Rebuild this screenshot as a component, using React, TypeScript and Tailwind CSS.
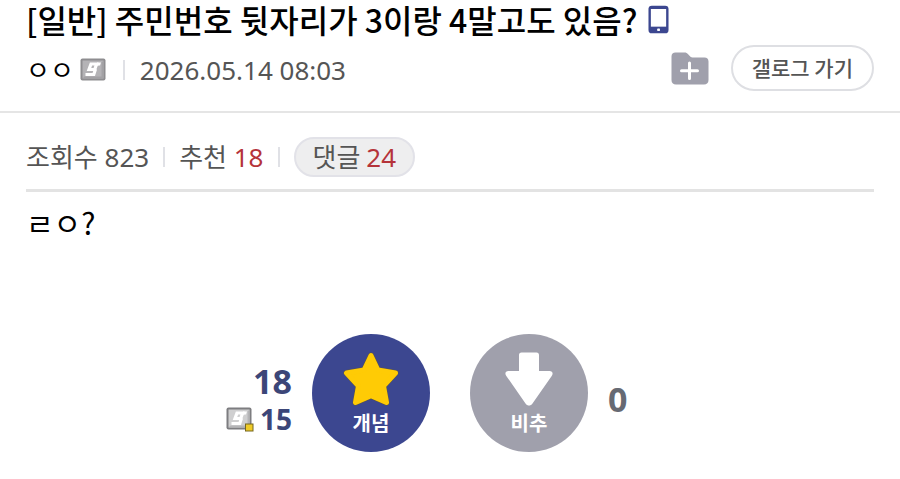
import type { ReactNode } from "react";

function Divider() {
  return <span aria-hidden="true" className="h-5 w-0.5 shrink-0 bg-[#e0e1e6]" />;
}

function MemberBadge({ dark = false, gold = false }: { dark?: boolean; gold?: boolean }) {
  return (
    <svg viewBox="0 0 28 25" className="h-[25px] w-7 shrink-0" aria-hidden="true">
      <rect x="0.5" y="0.5" width="25" height="22" rx="2" fill={dark ? "#7d7d80" : "#8e8d90"} />
      <rect x="2.5" y="2.5" width="21" height="18" fill={dark ? "#cfcfd0" : "#b4b3b6"} />
      <path d="M23.500 2.500v18h-21l2-2h17v-14z" fill={dark ? "#b5b5b7" : "#a3a2a5"} />
      <path
        d="M18.500 6H11L9 11.500H14.700L16.500 6.500M15.500 11L13.800 16.500H5.500"
        fill="none"
        stroke="#fff"
        strokeWidth="3.200"
      />
      <path d="M17 4.400h4l-1 3.200h-3z" fill="#fff" />
      {gold && <rect x="19.500" y="17" width="7.500" height="7" fill="#efcb28" stroke="#75661f" strokeWidth="1" />}
    </svg>
  );
}

function PhoneIcon() {
  return (
    <svg viewBox="0 0 22 30" className="h-[29px] w-[21px] shrink-0" role="img" aria-label="모바일">
      <rect x="0.5" y="0.5" width="21" height="29" rx="3.5" fill="#3c4790" />
      <rect x="3" y="4" width="16" height="18.5" fill="#fff" />
      <rect x="9.7" y="24.5" width="2.8" height="2.6" rx="0.6" fill="#fff" />
    </svg>
  );
}

function FolderPlusIcon() {
  return (
    <svg viewBox="0 0 38 33" className="h-[33px] w-[38px]" aria-hidden="true">
      <path
        d="M4.5 0.5h9c1.6 0 2.6.6 3.6 1.7l2.4 2.5c.6.6 1.2.8 2 .8H33.500c2.500 0 4 1.500 4 4v18.500c0 2.900-1.600 4.500-4.500 4.500H5C2.100 32.500.5 30.900.5 28V4.500c0-2.500 1.500-4 4-4z"
        fill="#a0a0ac"
      />
      <path d="M18.500 11v15.500M10.500 18.800h16" stroke="#fff" strokeWidth="3" strokeLinecap="round" />
    </svg>
  );
}

const starPath =
  "M28 3.500 34.900 18 52.500 21 40.500 34 43.500 50.500 28 43.800 12.500 50.500 15.500 34 3.500 21 21.100 18z";

function StarIcon() {
  return (
    <svg viewBox="0 0 56 54" className="h-[54px] w-14" aria-hidden="true">
      <path d={starPath} fill="#ffcb05" stroke="#5d5747" strokeWidth="6" strokeLinejoin="round" />
      <path d={starPath} fill="#ffcb05" stroke="#ffcb05" strokeWidth="5" strokeLinejoin="round" />
    </svg>
  );
}

function DownArrowIcon() {
  return (
    <svg viewBox="0 0 48 54" className="h-[54px] w-12" aria-hidden="true">
      <path
        d="M16.500 0.500h15c1.700 0 2.500.9 2.500 2.500v16h10.500c3 0 4 2.400 2.200 4.900L27.500 51.500c-2 2.700-5 2.700-7 0L1.300 23.900C-.5 21.400.5 19 3.500 19H14V3c0-1.600.8-2.500 2.500-2.500z"
        fill="#fff"
      />
    </svg>
  );
}

function VoteButton({ label, color, children }: { label: string; color: string; children: ReactNode }) {
  return (
    <button
      type="button"
      className={`flex size-[118px] shrink-0 flex-col items-center gap-0.5 rounded-full pt-[18px] text-xl leading-8 font-bold text-white ${color}`}
    >
      {children}
      {label}
    </button>
  );
}

export default function App() {
  return (
    <article className="bg-white font-['Noto_Sans','Noto_Sans_CJK_KR',sans-serif] text-[#555]">
      <header className="border-b-2 border-[#e5e5e5] px-[26px] pb-5">
        <div className="flex h-[38px] items-center gap-2.5">
          <h1 className="font-['Noto_Sans_CJK_KR',sans-serif] text-[32px] leading-[38px] font-medium whitespace-nowrap text-black">
            [일반] 주민번호 뒷자리가 3이랑 4말고도 있음?
          </h1>
          <PhoneIcon />
        </div>
        <div className="mt-[7px] flex items-center justify-between">
          <div className="flex items-center gap-[15px] pt-1 text-[26px] leading-8">
            <span className="flex items-center gap-1.5 text-black">
              <span>ㅇㅇ</span>
              <MemberBadge />
            </span>
            <Divider />
            <time dateTime="2026-05-14T08:03">2026.05.14 08:03</time>
          </div>
          <div className="flex items-center gap-[22px]">
            <button type="button" aria-label="스크랩">
              <FolderPlusIcon />
            </button>
            <a
              href="#gallog"
              className="flex h-[46px] items-center rounded-full border-2 border-[#dedfe3] px-[19px] font-['Noto_Sans_CJK_KR',sans-serif] text-[21px] font-medium"
            >
              갤로그 가기
            </a>
          </div>
        </div>
      </header>

      <div className="px-[26px] pt-6">
        <div className="flex items-center gap-3.5 border-b-3 border-[#e3e3e3] pb-3 text-[26px] leading-9">
          <span>조회수 823</span>
          <Divider />
          <span>
            추천 <span className="text-[#b5333a]">18</span>
          </span>
          <Divider />
          <a
            href="#comments"
            className="flex h-10 items-center gap-1.5 rounded-full border-2 border-[#e2e2e8] bg-[#eeeeef] px-[17px]"
          >
            댓글 <span className="text-[#b5333a]">24</span>
          </a>
        </div>

        <p className="mt-2.5 font-['Noto_Sans_CJK_KR',sans-serif] text-[30px] leading-10 text-black">ㄹㅇ?</p>
      </div>

      <section aria-label="추천" className="mt-[92px] grid grid-cols-[1fr_auto_1fr] items-center pb-6 font-bold">
        <div className="flex flex-col items-end pt-3 pr-5 text-[#3c4678]">
          <span className="text-[34px] leading-10">18</span>
          <span className="flex items-center gap-1.5 text-[28px] leading-9">
            <MemberBadge dark gold />
            15
          </span>
        </div>
        <div className="flex gap-10">
          <VoteButton label="개념" color="bg-[#3c4790]">
            <StarIcon />
          </VoteButton>
          <VoteButton label="비추" color="bg-[#a0a0ac]">
            <DownArrowIcon />
          </VoteButton>
        </div>
        <span className="pt-3 pl-5 text-[34px] leading-10 text-[#666a73]">0</span>
      </section>
    </article>
  );
}
